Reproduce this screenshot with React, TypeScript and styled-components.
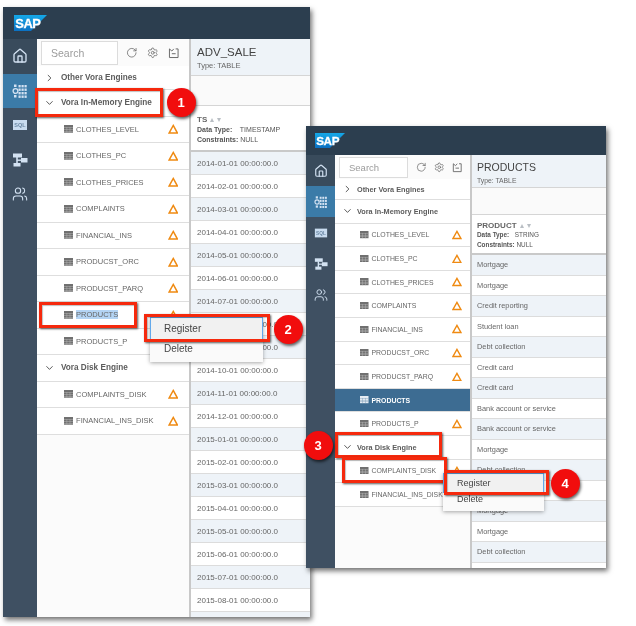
import React, { FunctionComponent } from 'react';
import styled, { createGlobalStyle } from 'styled-components';
import { RotateCw, Settings, Home, Users } from 'lucide-react';

const GlobalStyle = createGlobalStyle`
    html, body {
        margin: 0;
        padding: 0;
        background: #fff;
        font-family: "Liberation Sans", Arial, sans-serif;
    }
`;

interface Layout {
    x: number;
    y: number;
    w: number;
    h: number;
    headH: number;
    logoX: number;
    logoW: number;
    railW: number;
    navH: number;
    treeW: number;
    toolH: number;
    toolRight: number;
    firstRowH: number;
    rowH: number;
    searchW: number;
    searchH: number;
    searchFont: number;
    chevronX: number;
    sectionX: number;
    sectionFont: number;
    iconX: number;
    labelFont: number;
    warnRight: number;
    titleH: number;
    titleFont: number;
    typeFont: number;
    blankH: number;
    colH: number;
    colPad: number;
    metaFont: number;
    metaKeyW: number;
    cellH: number;
    cellFont: number;
    padX: number;
}

const FIRST: Layout = {
    x: 3, y: 7, w: 307, h: 610, headH: 32, logoX: 11, logoW: 33, railW: 34, navH: 34.5,
    treeW: 152, toolH: 27, toolRight: 10, firstRowH: 24, rowH: 26.5,
    searchW: 77, searchH: 24, searchFont: 10.5,
    chevronX: 9, sectionX: 24, sectionFont: 8.2, iconX: 27, labelFont: 7.5, warnRight: 11,
    titleH: 37, titleFont: 11.5, typeFont: 7.5, blankH: 30, colH: 46, colPad: 9, metaFont: 7, metaKeyW: 41,
    cellH: 23, cellFont: 8, padX: 6,
};

const SECOND: Layout = {
    x: 306, y: 126, w: 300, h: 442, headH: 29, logoX: 9, logoW: 30, railW: 29, navH: 31,
    treeW: 135, toolH: 24, toolRight: 8, firstRowH: 21, rowH: 23.6,
    searchW: 69, searchH: 21, searchFont: 9.5,
    chevronX: 9, sectionX: 22, sectionFont: 7.3, iconX: 25, labelFont: 6.9, warnRight: 8,
    titleH: 33, titleFont: 10.5, typeFont: 6.8, blankH: 27, colH: 40, colPad: 6, metaFont: 6.4, metaKeyW: 36,
    cellH: 20.5, cellFont: 7.4, padX: 5,
};

const Desktop = styled.div`
    position: relative;
    width: 636px;
    height: 626px;
    overflow: hidden;
    background: #fff;
    filter: blur(0.35px);
`;

const WindowFrame = styled.div<{ $l: Layout }>`
    position: absolute;
    left: ${(p) => p.$l.x}px;
    top: ${(p) => p.$l.y}px;
    width: ${(p) => p.$l.w}px;
    height: ${(p) => p.$l.h}px;
    display: flex;
    flex-direction: column;
    background: #fbfbfb;
    box-shadow: 2px 3px 5px rgba(0, 0, 0, 0.55);
`;

const TitleBar = styled.header<{ $l: Layout }>`
    flex: none;
    height: ${(p) => p.$l.headH}px;
    padding-left: ${(p) => p.$l.logoX}px;
    display: flex;
    align-items: center;
    background: #2c3e4f;
`;

const Body = styled.div`
    flex: 1;
    min-height: 0;
    display: flex;
`;

const Rail = styled.nav<{ $l: Layout }>`
    flex: none;
    width: ${(p) => p.$l.railW}px;
    background: #3f5062;
`;

const NavItem = styled.div<{ $l: Layout; $active?: boolean; $home?: boolean }>`
    height: ${(p) => p.$l.navH}px;
    display: flex;
    align-items: center;
    justify-content: center;
    color: #d3e2f2;
    background: ${(p) => (p.$active ? '#3b7ba8' : p.$home ? '#394b5c' : 'transparent')};
`;

const Tree = styled.aside<{ $l: Layout }>`
    flex: none;
    width: ${(p) => p.$l.treeW}px;
    background: #fbfbfb;
    color: #666;
`;

const Toolbar = styled.div<{ $l: Layout }>`
    height: ${(p) => p.$l.toolH}px;
    box-sizing: border-box;
    padding: 2px ${(p) => p.$l.toolRight}px 0 4px;
    display: flex;
    align-items: flex-start;
    justify-content: space-between;
    color: #666;
`;

const SearchBox = styled.div<{ $l: Layout }>`
    box-sizing: border-box;
    width: ${(p) => p.$l.searchW}px;
    height: ${(p) => p.$l.searchH}px;
    padding-left: 9px;
    display: flex;
    align-items: center;
    border: 1px solid #dcdcdc;
    background: #fff;
    color: #9c9c9c;
    font-size: ${(p) => p.$l.searchFont}px;
`;

const ToolIcons = styled.div<{ $l: Layout }>`
    height: ${(p) => p.$l.searchH}px;
    flex: 1;
    padding-left: 8px;
    display: flex;
    align-items: center;
    justify-content: space-between;
`;

const SectionRow = styled.div<{ $l: Layout; $first?: boolean }>`
    box-sizing: border-box;
    height: ${(p) => (p.$first ? p.$l.firstRowH : p.$l.rowH)}px;
    position: relative;
    display: flex;
    align-items: center;
    padding-left: ${(p) => p.$l.sectionX}px;
    background: #fff;
    border-bottom: 1px solid #dedede;
    color: #5c5c5c;
    font-size: ${(p) => p.$l.sectionFont}px;
    font-weight: 700;
`;

const ChevronSlot = styled.span<{ $l: Layout }>`
    position: absolute;
    left: ${(p) => p.$l.chevronX}px;
    top: 50%;
    transform: translateY(-50%);
    display: flex;
    color: #555;
`;

const TableRow = styled.div<{ $l: Layout; $selected?: boolean }>`
    box-sizing: border-box;
    height: ${(p) => p.$l.rowH}px;
    display: flex;
    align-items: center;
    gap: 3px;
    padding: 0 ${(p) => p.$l.warnRight}px 0 ${(p) => p.$l.iconX}px;
    background: ${(p) => (p.$selected ? '#3d6c92' : '#fff')};
    border-bottom: 1px solid #dedede;
    color: ${(p) => (p.$selected ? '#fff' : '#666')};
    font-size: ${(p) => p.$l.labelFont}px;
    font-weight: ${(p) => (p.$selected ? 700 : 400)};
`;

const RowLabel = styled.span<{ $marked?: boolean }>`
    flex: 1;
    white-space: nowrap;
    > mark {
        background: ${(p) => (p.$marked ? '#b4d4f4' : 'transparent')};
        color: inherit;
    }
`;

const DataPane = styled.section`
    flex: 1;
    min-width: 0;
    overflow: hidden;
    background: #fff;
    border-left: 2px solid #c8c8c8;
    color: #666;
`;

const PaneTitle = styled.div<{ $l: Layout }>`
    box-sizing: border-box;
    height: ${(p) => p.$l.titleH}px;
    padding: ${(p) => p.$l.titleH * 0.16}px 0 0 ${(p) => p.$l.padX}px;
    background: #eef3f8;
    border-bottom: 1px solid #d5d5d5;
    > h1 {
        margin: 0;
        font-size: ${(p) => p.$l.titleFont}px;
        line-height: 14px;
        font-weight: 400;
        color: #444;
    }
    > p {
        margin: 1px 0 0;
        font-size: ${(p) => p.$l.typeFont}px;
        line-height: 11px;
        color: #666;
    }
`;

const PaneBlank = styled.div<{ $l: Layout }>`
    box-sizing: border-box;
    height: ${(p) => p.$l.blankH}px;
    background: #fafafa;
    border-bottom: 1px solid #d5d5d5;
`;

const ColumnHead = styled.div<{ $l: Layout }>`
    box-sizing: border-box;
    height: ${(p) => p.$l.colH}px;
    padding: ${(p) => p.$l.colPad}px 0 0 ${(p) => p.$l.padX}px;
    background: #fff;
    border-bottom: 2px solid #c9c9c9;
    font-size: ${(p) => p.$l.metaFont}px;
    line-height: ${(p) => p.$l.metaFont + 3}px;
    color: #555;
`;

const ColumnName = styled.div`
    display: flex;
    align-items: center;
    gap: 3px;
    font-weight: 700;
    color: #666;
    font-size: 8px;
`;

const SortMark = styled.span<{ $down?: boolean }>`
    width: 0;
    height: 0;
    border-left: 2.5px solid transparent;
    border-right: 2.5px solid transparent;
    border-${(p) => (p.$down ? 'top' : 'bottom')}: 4px solid #b9bec4;
`;

const MetaKey = styled.b<{ $w?: number }>`
    display: inline-block;
    min-width: ${(p) => p.$w ?? 0}px;
`;

const Cell = styled.div<{ $l: Layout; $odd: boolean }>`
    box-sizing: border-box;
    height: ${(p) => p.$l.cellH}px;
    display: flex;
    align-items: center;
    padding-left: ${(p) => p.$l.padX}px;
    background: ${(p) => (p.$odd ? '#eef3f8' : '#fff')};
    border-bottom: 1px solid #dcdcdc;
    font-size: ${(p) => p.$l.cellFont}px;
    white-space: nowrap;
    color: #666;
`;

const Menu = styled.div<{ $x: number; $y: number; $w: number; $font: number; $pad: number }>`
    position: absolute;
    left: ${(p) => p.$x}px;
    top: ${(p) => p.$y}px;
    width: ${(p) => p.$w}px;
    padding-bottom: ${(p) => p.$pad}px;
    background: #fafafa;
    box-shadow: 0 1px 4px rgba(0, 0, 0, 0.35);
    font-size: ${(p) => p.$font}px;
    color: #444;
`;

const MenuItem = styled.div<{ $h: number; $active?: boolean }>`
    box-sizing: border-box;
    height: ${(p) => p.$h}px;
    display: flex;
    align-items: center;
    padding-left: ${(p) => (p.$active ? 13 : 14)}px;
    background: ${(p) => (p.$active ? '#f1f1f1' : 'transparent')};
    border: ${(p) => (p.$active ? '1px solid #62a8ea' : 'none')};
`;

const RedFrame = styled.div<{ $x: number; $y: number; $w: number; $h: number }>`
    position: absolute;
    left: ${(p) => p.$x}px;
    top: ${(p) => p.$y}px;
    width: ${(p) => p.$w}px;
    height: ${(p) => p.$h}px;
    box-sizing: border-box;
    border: 3.5px solid #f5290d;
    box-shadow: 1px 1px 2px rgba(0, 0, 0, 0.65), inset 1px 1px 1px rgba(0, 0, 0, 0.25);
`;

const Badge = styled.div<{ $cx: number; $cy: number }>`
    position: absolute;
    left: ${(p) => p.$cx - 14.5}px;
    top: ${(p) => p.$cy - 14.5}px;
    width: 29px;
    height: 29px;
    border-radius: 50%;
    display: flex;
    align-items: center;
    justify-content: center;
    background: #f10d0d;
    box-shadow: 1px 2px 3px rgba(0, 0, 0, 0.6);
    color: #fff;
    font-size: 13px;
    font-weight: 700;
`;

const SapLogo: FunctionComponent<{ width: number; id: string }> = ({ width, id }) => (
    <svg width={width} height={width / 2} viewBox="0 0 32 16">
        <defs>
            <linearGradient id={id} x1="0" y1="0" x2="0" y2="1">
                <stop offset="0" stopColor="#15a8e8" />
                <stop offset="1" stopColor="#0a6fc2" />
            </linearGradient>
        </defs>
        <polygon points="0,0 32,0 16,16 0,16" fill={`url(#${id})`} />
        <text
            x="1.2"
            y="12.6"
            fontSize="12.5"
            fontWeight="700"
            fill="#fff"
            stroke="#fff"
            strokeWidth="0.3"
            fontFamily="Liberation Sans, sans-serif"
            letterSpacing="-0.4"
        >
            SAP
        </text>
    </svg>
);

const GridIcon: FunctionComponent<{ size: number }> = ({ size }) => (
    <svg width={size} height={size} viewBox="0 0 16 16" fill="currentColor">
        <circle cx="3.5" cy="8" r="2.4" fill="none" stroke="currentColor" strokeWidth="1.3" />
        {[6.5, 9.5, 12.5].map((x) =>
            [2, 5.5, 9, 12.5].map((y) => <rect key={`${x}-${y}`} x={x} y={y} width="2.2" height="2.4" />)
        )}
        <rect x="2" y="1.5" width="2.5" height="2.5" />
        <rect x="2" y="12" width="2.5" height="2.5" />
    </svg>
);

const SqlIcon: FunctionComponent<{ size: number }> = ({ size }) => (
    <svg width={size} height={size} viewBox="0 0 16 16">
        <rect x="1" y="3" width="14" height="10" fill="#c9dcf0" />
        <text x="8" y="10.4" textAnchor="middle" fontSize="5.5" fontWeight="700" fill="#6d8aa6" fontFamily="Liberation Sans, sans-serif">
            SQL
        </text>
    </svg>
);

const HierarchyIcon: FunctionComponent<{ size: number }> = ({ size }) => (
    <svg width={size} height={size} viewBox="0 0 16 16" fill="currentColor">
        <rect x="1" y="1.5" width="9" height="4" />
        <rect x="9" y="6" width="6.5" height="4.5" />
        <rect x="1.5" y="11" width="7" height="3.5" />
        <rect x="4.2" y="5" width="1.6" height="6.5" />
        <rect x="5" y="7.5" width="4.5" height="1.4" />
    </svg>
);

const TableIcon: FunctionComponent<{ light?: boolean; size: number }> = ({ light, size }) => (
    <svg width={size} height={size * 0.85} viewBox="0 0 13 11" style={{ flex: 'none' }}>
        <rect width="13" height="11" fill={light ? '#e8eef4' : '#6f6f6f'} />
        {[3, 6, 8.5].map((y) => (
            <rect key={y} x="0" y={y} width="13" height="0.7" fill={light ? '#7f9fb8' : '#b5b5b5'} />
        ))}
        {[3.8, 8.2].map((x) => (
            <rect key={x} x={x} y="3" width="0.7" height="8" fill={light ? '#7f9fb8' : '#b5b5b5'} />
        ))}
    </svg>
);

const WarnIcon: FunctionComponent<{ size: number }> = ({ size }) => (
    <svg width={size} height={size} viewBox="0 0 10 10" style={{ flex: 'none' }}>
        <path d="M5 1.4 L9 8.6 L1 8.6 Z" fill="none" stroke="#ef8a12" strokeWidth="1.4" />
    </svg>
);

const Chevron: FunctionComponent<{ open?: boolean }> = ({ open }) => (
    <svg width="7" height="7" viewBox="0 0 8 8">
        <path d={open ? 'M0.5 2 L4 5.6 L7.5 2' : 'M2 0.5 L5.6 4 L2 7.5'} fill="none" stroke="currentColor" strokeWidth="1.1" />
    </svg>
);

const TrayIcon: FunctionComponent<{ size: number }> = ({ size }) => (
    <svg width={size} height={size} viewBox="0 0 12 12" fill="none" stroke="currentColor" strokeWidth="1">
        <path d="M1.5 2 L1.5 11 L10.5 11 L10.5 2 L8 2" />
        <path d="M1.5 2 L4 4.2 L6 2" />
        <path d="M4 7 L8 7" />
    </svg>
);

interface TreeItem {
    name: string;
    warn?: boolean;
    selected?: boolean;
    marked?: boolean;
}

const memoryTables = (selected: boolean): TreeItem[] => [
    { name: 'CLOTHES_LEVEL', warn: true },
    { name: 'CLOTHES_PC', warn: true },
    { name: 'CLOTHES_PRICES', warn: true },
    { name: 'COMPLAINTS', warn: true },
    { name: 'FINANCIAL_INS', warn: true },
    { name: 'PRODUCST_ORC', warn: true },
    { name: 'PRODUCST_PARQ', warn: true },
    { name: 'PRODUCTS', warn: !selected, selected, marked: !selected },
    { name: 'PRODUCTS_P', warn: true },
];

const diskTables: TreeItem[] = [
    { name: 'COMPLAINTS_DISK', warn: true },
    { name: 'FINANCIAL_INS_DISK', warn: true },
];

// 20 months, then an empty row that the window's bottom edge cuts off
const dates: string[] = [];
for (let i = 0; i < 20; i++) {
    const year = 2014 + Math.floor(i / 12);
    const month = String((i % 12) + 1).padStart(2, '0');
    dates.push(`${year}-${month}-01 00:00:00.0`);
}
dates.push('');

const products = [
    'Mortgage',
    'Mortgage',
    'Credit reporting',
    'Student loan',
    'Debt collection',
    'Credit card',
    'Credit card',
    'Bank account or service',
    'Bank account or service',
    'Mortgage',
    'Debt collection',
    'Mortgage',
    'Mortgage',
    'Mortgage',
    'Debt collection',
];

interface AppWindowProps {
    l: Layout;
    logoId: string;
    title: string;
    column: string;
    dataType: string;
    cells: string[];
    selected: boolean;
}

const AppWindow: FunctionComponent<AppWindowProps> = ({ l, logoId, title, column, dataType, cells, selected }) => {
    const navIcon = Math.round(l.railW * 0.47);
    const renderRow = (item: TreeItem) => (
        <TableRow $l={l} $selected={item.selected} key={item.name}>
            <TableIcon size={l.labelFont + 1.6} light={item.selected} />
            <RowLabel $marked={item.marked}>
                <mark>{item.name}</mark>
            </RowLabel>
            {item.warn && <WarnIcon size={l.labelFont + 3} />}
        </TableRow>
    );

    return (
        <WindowFrame $l={l}>
            <TitleBar $l={l}>
                <SapLogo width={l.logoW} id={logoId} />
            </TitleBar>
            <Body>
                <Rail $l={l}>
                    <NavItem $l={l} $home>
                        <Home size={navIcon} strokeWidth={2} />
                    </NavItem>
                    <NavItem $l={l} $active>
                        <GridIcon size={navIcon} />
                    </NavItem>
                    <NavItem $l={l}>
                        <SqlIcon size={navIcon} />
                    </NavItem>
                    <NavItem $l={l}>
                        <HierarchyIcon size={navIcon} />
                    </NavItem>
                    <NavItem $l={l}>
                        <Users size={navIcon} strokeWidth={1.6} />
                    </NavItem>
                </Rail>
                <Tree $l={l}>
                    <Toolbar $l={l}>
                        <SearchBox $l={l}>Search</SearchBox>
                        <ToolIcons $l={l}>
                            <RotateCw size={l.searchFont + 1} strokeWidth={1.6} />
                            <Settings size={l.searchFont + 1} strokeWidth={1.6} />
                            <TrayIcon size={l.searchFont + 1} />
                        </ToolIcons>
                    </Toolbar>
                    <SectionRow $l={l} $first>
                        <ChevronSlot $l={l}>
                            <Chevron />
                        </ChevronSlot>
                        Other Vora Engines
                    </SectionRow>
                    <SectionRow $l={l}>
                        <ChevronSlot $l={l}>
                            <Chevron open />
                        </ChevronSlot>
                        Vora In-Memory Engine
                    </SectionRow>
                    {memoryTables(selected).map(renderRow)}
                    <SectionRow $l={l}>
                        <ChevronSlot $l={l}>
                            <Chevron open />
                        </ChevronSlot>
                        Vora Disk Engine
                    </SectionRow>
                    {diskTables.map(renderRow)}
                </Tree>
                <DataPane>
                    <PaneTitle $l={l}>
                        <h1>{title}</h1>
                        <p>Type: TABLE</p>
                    </PaneTitle>
                    <PaneBlank $l={l} />
                    <ColumnHead $l={l}>
                        <ColumnName>
                            {column}
                            <SortMark />
                            <SortMark $down />
                        </ColumnName>
                        <div>
                            <MetaKey $w={l.metaKeyW}>Data Type:</MetaKey> {dataType}
                        </div>
                        <div>
                            <MetaKey>Constraints:</MetaKey> NULL
                        </div>
                    </ColumnHead>
                    {cells.map((cell, i) => (
                        <Cell $l={l} $odd={i % 2 === 0} key={i}>
                            {cell}
                        </Cell>
                    ))}
                </DataPane>
            </Body>
        </WindowFrame>
    );
};

const App: FunctionComponent = () => (
    <Desktop>
        <GlobalStyle />
        <AppWindow
            l={FIRST}
            logoId="sap-a"
            title="ADV_SALE"
            column="TS"
            dataType="TIMESTAMP"
            cells={dates}
            selected={false}
        />
        <RedFrame $x={35} $y={88} $w={128} $h={29} />
        <Badge $cx={181} $cy={102}>1</Badge>
        <RedFrame $x={39} $y={302} $w={98} $h={26} />
        <Menu $x={150} $y={317} $w={113} $font={10} $pad={5}>
            <MenuItem $h={23} $active>Register</MenuItem>
            <MenuItem $h={17}>Delete</MenuItem>
        </Menu>
        <RedFrame $x={144} $y={314} $w={126} $h={28} />
        <Badge $cx={288} $cy={329}>2</Badge>

        <AppWindow
            l={SECOND}
            logoId="sap-b"
            title="PRODUCTS"
            column="PRODUCT"
            dataType="STRING"
            cells={products}
            selected
        />
        <RedFrame $x={335} $y={432} $w={107} $h={26} />
        <RedFrame $x={342} $y={457} $w={105} $h={26} />
        <Badge $cx={318} $cy={445}>3</Badge>
        <Menu $x={443} $y={473} $w={101} $font={9} $pad={6}>
            <MenuItem $h={20} $active>Register</MenuItem>
            <MenuItem $h={12}>Delete</MenuItem>
        </Menu>
        <RedFrame $x={444} $y={470} $w={105} $h={25} />
        <Badge $cx={565} $cy={483}>4</Badge>
    </Desktop>
);

export default App;
